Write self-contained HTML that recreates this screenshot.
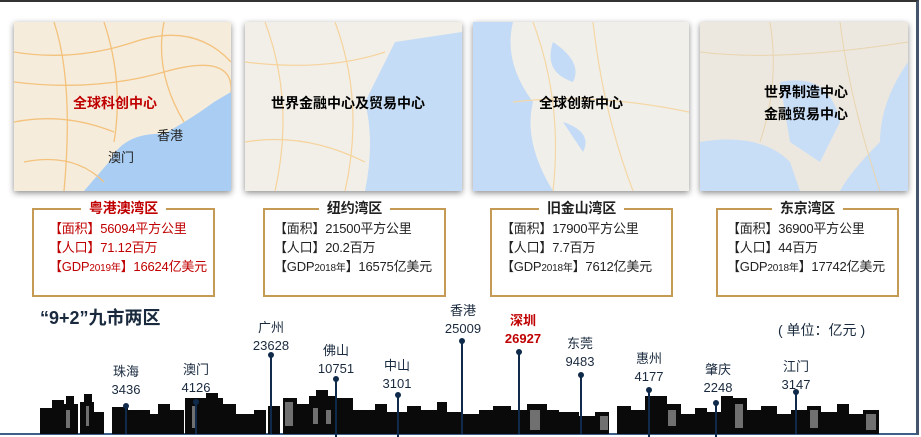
<!DOCTYPE html>
<html><head><meta charset="utf-8"><style>
html,body{margin:0;padding:0;background:#fff;}
body{width:921px;height:437px;position:relative;overflow:hidden;font-family:"Liberation Sans","Noto Sans CJK SC",sans-serif;}
.frame{position:absolute;left:0;top:0;width:919px;height:435px;border-top:2px solid #333;border-right:3px solid #44546a;border-bottom:2px solid #3e5f8a;box-sizing:border-box;}
.map{position:absolute;top:22px;height:169px;box-shadow:0 2px 6px rgba(0,0,0,.45);overflow:hidden;}
.map .t{position:absolute;font-weight:bold;font-size:14px;color:#000;white-space:nowrap;}
.box{position:absolute;top:208px;height:89px;border:2px solid #c49a55;box-sizing:border-box;font-size:13px;line-height:19px;padding:9px 0 0 9px;white-space:nowrap;letter-spacing:-0.2px;}
.box .h{position:absolute;top:-11px;left:0;right:0;text-align:center;}
.box .h span{background:#fff;padding:0 8px;font-weight:bold;font-size:14px;}
.sm{font-size:10px;}
.c{position:absolute;font-size:13px;line-height:18px;color:#1a2a3e;text-align:center;width:60px;}
.dot{position:absolute;width:6px;height:6px;border-radius:50%;background:#0f2a4a;}
.ln{position:absolute;width:1.5px;background:#0f2a4a;}
</style></head><body>
<div class="frame"></div>

<div class="map" style="left:14px;width:217px;background:#f5ecdc;">
<svg width="217" height="169" style="position:absolute;left:0;top:0"><path d="M70 169 L95 140 Q110 110 150 112 Q180 95 200 80 L217 70 L217 169 Z" fill="#a9cdf3"/><g stroke="#f4c27c" stroke-width="1.3" fill="none"><path d="M0 30 Q60 40 120 20 T217 40"/><path d="M0 60 Q80 70 150 50 T217 70"/><path d="M40 0 Q60 60 50 169"/><path d="M90 0 Q110 60 100 120"/><path d="M150 0 Q140 50 170 100"/><path d="M0 100 Q50 90 100 110"/><path d="M10 140 Q60 130 90 160"/></g></svg>
<div class="t" style="left:59px;top:71px;color:#c00000;">全球科创中心</div>
<div style="position:absolute;left:143px;top:103px;font-size:13px;color:#222;">香港</div>
<div style="position:absolute;left:94px;top:125px;font-size:13px;color:#222;">澳门</div>
</div>

<div class="map" style="left:245px;width:217px;background:#f2efe8;">
<svg width="217" height="169" style="position:absolute;left:0;top:0"><path d="M217 10 L150 20 Q130 60 120 80 Q130 120 120 169 L217 169 Z" fill="#c4dcf5"/><g stroke="#f6d39c" stroke-width="1.2" fill="none"><path d="M0 40 Q80 50 140 30"/><path d="M20 0 Q50 80 30 169"/><path d="M90 0 Q120 80 100 169"/><path d="M0 120 Q60 110 120 140"/></g></svg>
<div class="t" style="left:26px;top:71px;">世界金融中心及贸易中心</div>
</div>

<div class="map" style="left:473px;width:216px;background:#f1efe9;">
<svg width="216" height="169" style="position:absolute;left:0;top:0"><path d="M0 0 L40 0 Q30 40 60 80 Q50 120 80 169 L0 169 Z" fill="#c3dbf6"/><g stroke="#f4d7a6" stroke-width="1.2" fill="none"><path d="M60 0 Q90 80 80 169"/><path d="M120 0 Q130 90 160 169"/><path d="M40 80 Q120 70 216 90"/></g><path d="M80 20 Q110 40 100 60 Q70 50 80 20 Z" fill="#c3dbf6"/><path d="M90 100 Q120 110 110 130 Z" fill="#c3dbf6"/></svg>
<div class="t" style="left:66px;top:71px;">全球创新中心</div>
</div>

<div class="map" style="left:700px;width:208px;background:#ece8df;">
<svg width="208" height="169" style="position:absolute;left:0;top:0"><path d="M0 120 Q60 110 90 140 L100 169 L0 169 Z" fill="#c8ddf6"/><path d="M208 40 Q180 80 180 120 Q150 150 140 169 L208 169 Z" fill="#c8ddf6"/><path d="M80 60 Q130 50 140 100 L120 140 L90 120 Z" fill="#c8ddf6"/><g stroke="#e9d4ae" stroke-width="1" fill="none"><path d="M0 30 Q80 40 208 20"/><path d="M70 0 Q80 60 60 120"/><path d="M140 0 Q150 80 180 169"/></g></svg>
<div class="t" style="left:64px;top:59px;line-height:22px;">世界制造中心<br>金融贸易中心</div>
</div>

<div class="box" style="left:32px;width:183px;color:#c00000;padding-left:15px;"><div class="h"><span>粤港澳湾区</span></div>
<div>【面积】56094平方公里<br>【人口】71.12百万<br>【GDP<span class="sm">2019年</span>】16624亿美元</div></div>
<div class="box" style="left:263px;width:183px;color:#222;"><div class="h"><span>纽约湾区</span></div>
<div>【面积】21500平方公里<br>【人口】20.2百万<br>【GDP<span class="sm">2018年</span>】16575亿美元</div></div>
<div class="box" style="left:490px;width:183px;color:#222;"><div class="h"><span>旧金山湾区</span></div>
<div>【面积】17900平方公里<br>【人口】7.7百万<br>【GDP<span class="sm">2018年</span>】7612亿美元</div></div>
<div class="box" style="left:716px;width:183px;color:#222;"><div class="h"><span>东京湾区</span></div>
<div>【面积】36900平方公里<br>【人口】44百万<br>【GDP<span class="sm">2018年</span>】17742亿美元</div></div>

<div style="position:absolute;left:40px;top:304px;font-size:18px;font-weight:bold;color:#1a2a3e;">“9+2”九市两区</div>
<div style="position:absolute;left:778px;top:320px;font-size:14px;color:#1a2a3e;">( 单位：亿元 )</div>

<svg width="921" height="437" style="position:absolute;left:0;top:0">
<g fill="#0a0a0a">
<rect x="40" y="408" width="18" height="26"/><rect x="52" y="400" width="12" height="34"/><rect x="62" y="404" width="16" height="30"/><rect x="66" y="396" width="8" height="10"/>
<rect x="80" y="402" width="14" height="32"/><rect x="84" y="394" width="8" height="10"/><rect x="94" y="412" width="10" height="22"/>
<rect x="112" y="407" width="16" height="27"/><rect x="128" y="410" width="22" height="24"/><rect x="150" y="414" width="10" height="20"/>
<rect x="158" y="404" width="12" height="30"/><rect x="170" y="410" width="14" height="24"/><rect x="185" y="398" width="14" height="36"/>
<rect x="199" y="398" width="24" height="36"/><rect x="206" y="393" width="12" height="8"/><rect x="222" y="404" width="14" height="30"/>
<rect x="236" y="414" width="20" height="20"/><rect x="254" y="410" width="12" height="24"/><rect x="268" y="406" width="12" height="28"/>
<rect x="283" y="398" width="14" height="36"/><rect x="297" y="404" width="12" height="30"/><rect x="309" y="396" width="26" height="38"/>
<rect x="316" y="390" width="12" height="8"/><rect x="335" y="398" width="18" height="36"/><rect x="353" y="410" width="22" height="24"/>
<rect x="375" y="404" width="12" height="30"/><rect x="387" y="412" width="20" height="22"/><rect x="407" y="406" width="14" height="28"/>
<rect x="421" y="410" width="16" height="24"/><rect x="437" y="402" width="10" height="32"/><rect x="447" y="412" width="14" height="22"/>
<rect x="461" y="414" width="18" height="20"/><rect x="479" y="410" width="14" height="24"/><rect x="493" y="406" width="18" height="28"/>
<rect x="511" y="410" width="16" height="24"/><rect x="527" y="404" width="20" height="30"/><rect x="547" y="410" width="12" height="24"/>
<rect x="559" y="412" width="20" height="22"/><rect x="579" y="416" width="16" height="18"/><rect x="595" y="412" width="14" height="22"/>
<rect x="617" y="406" width="14" height="28"/><rect x="631" y="410" width="14" height="24"/><rect x="645" y="396" width="22" height="38"/>
<rect x="667" y="404" width="14" height="30"/><rect x="681" y="414" width="14" height="20"/><rect x="695" y="408" width="12" height="26"/>
<rect x="707" y="412" width="14" height="22"/><rect x="721" y="396" width="12" height="38"/><rect x="733" y="398" width="14" height="36"/>
<rect x="747" y="410" width="14" height="24"/><rect x="761" y="406" width="16" height="28"/><rect x="777" y="414" width="14" height="20"/>
<rect x="791" y="410" width="16" height="24"/><rect x="807" y="406" width="14" height="28"/><rect x="821" y="412" width="16" height="22"/>
<rect x="837" y="404" width="12" height="30"/><rect x="849" y="414" width="14" height="20"/><rect x="863" y="410" width="16" height="24"/>
</g>
<g fill="#8a8a8a" opacity=".8">
<rect x="66" y="410" width="4" height="18"/><rect x="86" y="406" width="3" height="20"/><rect x="192" y="406" width="4" height="22"/>
<rect x="285" y="402" width="8" height="24"/><rect x="313" y="408" width="5" height="16"/><rect x="326" y="410" width="5" height="14"/>
<rect x="530" y="410" width="10" height="20"/><rect x="600" y="416" width="8" height="14"/><rect x="668" y="410" width="8" height="16"/>
<rect x="735" y="404" width="8" height="24"/><rect x="810" y="410" width="8" height="18"/><rect x="866" y="414" width="10" height="16"/>
</g>
</svg>

<div class="ln" style="left:125px;top:406px;height:28px"></div><div class="dot" style="left:123px;top:403px"></div>
<div class="ln" style="left:195px;top:402px;height:32px"></div><div class="dot" style="left:193px;top:399px"></div>
<div class="ln" style="left:270px;top:355px;height:79px"></div><div class="dot" style="left:268px;top:352px"></div>
<div class="ln" style="left:335px;top:379px;height:58px"></div><div class="dot" style="left:333px;top:376px"></div>
<div class="ln" style="left:397px;top:395px;height:42px"></div><div class="dot" style="left:395px;top:392px"></div>
<div class="ln" style="left:461px;top:341px;height:93px"></div><div class="dot" style="left:459px;top:338px"></div>
<div class="ln" style="left:518px;top:352px;height:82px"></div><div class="dot" style="left:516px;top:349px"></div>
<div class="ln" style="left:580px;top:375px;height:59px"></div><div class="dot" style="left:578px;top:372px"></div>
<div class="ln" style="left:648px;top:390px;height:47px"></div><div class="dot" style="left:646px;top:387px"></div>
<div class="ln" style="left:715px;top:403px;height:34px"></div><div class="dot" style="left:713px;top:400px"></div>
<div class="ln" style="left:795px;top:392px;height:42px"></div><div class="dot" style="left:793px;top:389px"></div>

<div class="c" style="left:96px;top:363px">珠海<br>3436</div>
<div class="c" style="left:166px;top:361px">澳门<br>4126</div>
<div class="c" style="left:241px;top:319px">广州<br>23628</div>
<div class="c" style="left:306px;top:342px">佛山<br>10751</div>
<div class="c" style="left:367px;top:357px">中山<br>3101</div>
<div class="c" style="left:433px;top:302px">香港<br>25009</div>
<div class="c" style="left:493px;top:312px;color:#c00000;font-weight:bold">深圳<br>26927</div>
<div class="c" style="left:550px;top:335px">东莞<br>9483</div>
<div class="c" style="left:619px;top:350px">惠州<br>4177</div>
<div class="c" style="left:688px;top:361px">肇庆<br>2248</div>
<div class="c" style="left:766px;top:358px">江门<br>3147</div>
</body></html>
